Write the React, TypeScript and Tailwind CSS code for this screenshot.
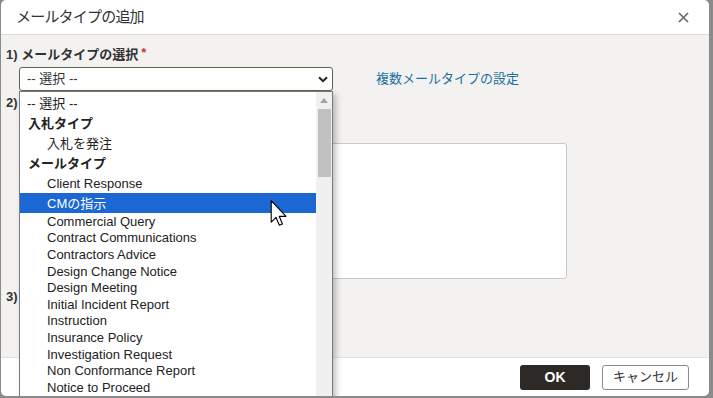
import React from "react";

const font = { fontFamily: '"Liberation Sans", "Noto Sans CJK JP", sans-serif' };

type Opt = { label: string; kind: "plain" | "group" | "item"; active?: boolean; tall?: boolean };

const options: Opt[] = [
  { label: "-- 選択 --", kind: "plain", tall: true },
  { label: "入札タイプ", kind: "group", tall: true },
  { label: "入札を発注", kind: "item", tall: true },
  { label: "メールタイプ", kind: "group", tall: true },
  { label: "Client Response", kind: "item", tall: true },
  { label: "CMの指示", kind: "item", active: true, tall: true },
  { label: "Commercial Query", kind: "item" },
  { label: "Contract Communications", kind: "item" },
  { label: "Contractors Advice", kind: "item" },
  { label: "Design Change Notice", kind: "item" },
  { label: "Design Meeting", kind: "item" },
  { label: "Initial Incident Report", kind: "item" },
  { label: "Instruction", kind: "item" },
  { label: "Insurance Policy", kind: "item" },
  { label: "Investigation Request", kind: "item" },
  { label: "Non Conformance Report", kind: "item" },
  { label: "Notice to Proceed", kind: "item" },
];

function Dropdown() {
  return (
    <div className="absolute left-0 top-full z-20 flex h-[320px] w-[314px] overflow-hidden border border-[#7a7a7a] bg-white shadow-[3px_3px_6px_rgba(0,0,0,0.25)]">
      <div className="flex flex-1 flex-col pt-px">
        {options.map((o) => (
          <div
            key={o.label}
            className={[
              "flex shrink-0 items-center text-[13px] leading-none",
              o.tall ? "h-[20px]" : "h-[16.6px]",
              o.kind === "plain" ? "pl-[7px]" : o.kind === "group" ? "pl-[8px] font-bold" : "pl-[27px]",
              o.active ? "bg-[#1b67d3] text-white" : "text-[#222]",
            ].join(" ")}
          >
            {o.label}
          </div>
        ))}
      </div>
      <div className="flex w-[16px] flex-col items-center bg-[#f0f0f0]">
        <div className="flex h-[17px] w-full items-center justify-center">
          <svg width="8" height="5" viewBox="0 0 8 5">
            <path d="M0 5 L4 0 L8 5 Z" fill="#a3a3a3" />
          </svg>
        </div>
        <div className="h-[68px] w-[13px] bg-[#c1c1c1]" />
      </div>
    </div>
  );
}

function Cursor() {
  return (
    <svg className="absolute left-[270px] top-[200px] z-30" width="19" height="27" viewBox="0 0 13 19.5">
      <path
        d="M0.5 0.5 L0.5 16 L4 12.6 L6.4 18.2 L8.6 17.3 L6.3 11.8 L11.2 11.8 Z"
        fill="#fff"
        stroke="#000"
        strokeWidth="0.8"
        strokeLinejoin="round"
      />
    </svg>
  );
}

export default function App() {
  return (
    <div className="relative h-[398px] w-[713px] overflow-hidden bg-[#8b8b8b]" style={font}>
      <div className="ml-px flex h-[396px] w-[708px] flex-col overflow-hidden rounded-[5px] bg-white">
        {/* header */}
        <div className="flex h-[35px] shrink-0 items-center justify-between border-b border-[#dddddd] pl-[15px] pr-[20px]">
          <h1 className="text-[15px] tracking-[-0.8px] text-[#333]">メールタイプの追加</h1>
          <svg width="11" height="11" viewBox="0 0 11 11">
            <path d="M1 1 L10 10 M10 1 L1 10" stroke="#666" strokeWidth="1.6" />
          </svg>
        </div>

        {/* body */}
        <div className="flex flex-1 flex-col bg-[#f3f2f1] pl-[5px] pt-[12px] text-[#333]">
          <div className="flex h-[16px] items-center text-[13px] font-bold">
            1) メールタイプの選択
            <span className="ml-[3px] -mt-[4px] text-[#d13438]">*</span>
          </div>
          <div className="mt-[4px] flex items-center pl-[13px]">
            <div className="relative">
              <div className="flex h-[24px] w-[314px] items-center justify-between rounded-[3px] border border-[#5b6b4a] bg-white pl-[7px] pr-[4px] text-[13px] text-[#333]">
                <span>-- 選択 --</span>
                <svg width="10" height="7" viewBox="0 0 10 7">
                  <path d="M1 1.2 L5 5.2 L9 1.2" fill="none" stroke="#222" strokeWidth="2" />
                </svg>
              </div>
              <Dropdown />
            </div>
            <a className="ml-[43px] text-[13px] text-[#1a6f9f]">複数メールタイプの設定</a>
          </div>

          <div className="mt-[4px] flex h-[16px] items-center text-[13px] font-bold">2)</div>
          <div className="ml-[13px] mt-[32px] h-[136px] w-[548px] rounded-[3px] border border-[#c8c8c8] bg-white" />

          <div className="mt-[10px] flex h-[16px] items-center text-[13px] font-bold">3)</div>
        </div>

        {/* footer */}
        <div className="flex h-[39px] shrink-0 items-center justify-end gap-[12px] border-t border-[#e1e1e1] pr-[20px]">
          <button className="h-[25px] w-[70px] rounded-[3px] bg-[#2d2926] text-[14px] font-semibold text-white">OK</button>
          <button className="h-[25px] w-[87px] rounded-[3px] border border-[#8a8a8a] bg-white text-[13px] text-[#333]">
            キャンセル
          </button>
        </div>
      </div>
      <Cursor />
    </div>
  );
}
